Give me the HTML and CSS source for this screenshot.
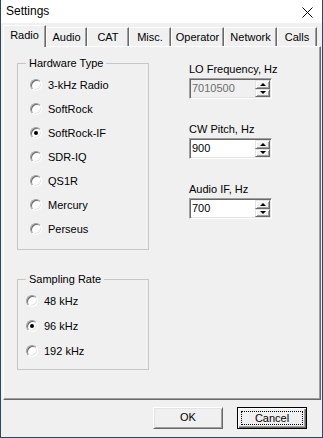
FILE: index.html
```html
<!DOCTYPE html>
<html lang="en">
<head>
    <meta charset="UTF-8">
    <title>Settings</title>
    <link rel="stylesheet" href="styles.css">
</head>
<body>
    <div class="window">
        <div class="titlebar">
            <span class="title">Settings</span>
            <svg class="close" width="11" height="11" viewBox="0 0 11 11">
                <path d="M0.5 0.5 L10.5 10.5 M10.5 0.5 L0.5 10.5" stroke="#000" stroke-width="1" fill="none"/>
            </svg>
        </div>
        <ul class="tabs">
            <li class="tab on t-radio">Radio</li>
            <li class="tab t-audio">Audio</li>
            <li class="tab t-cat">CAT</li>
            <li class="tab t-misc">Misc.</li>
            <li class="tab t-operator">Operator</li>
            <li class="tab t-network">Network</li>
            <li class="tab t-calls">Calls</li>
        </ul>
        <div class="panel">
            <div class="col-left">
                <fieldset class="group hw">
                    <legend>Hardware Type</legend>
                    <div class="opts">
                        <div class="opt"><span class="radio"></span>3-kHz Radio</div>
                        <div class="opt"><span class="radio"></span>SoftRock</div>
                        <div class="opt"><span class="radio checked"></span>SoftRock-IF</div>
                        <div class="opt"><span class="radio"></span>SDR-IQ</div>
                        <div class="opt"><span class="radio"></span>QS1R</div>
                        <div class="opt"><span class="radio"></span>Mercury</div>
                        <div class="opt"><span class="radio"></span>Perseus</div>
                    </div>
                </fieldset>
                <fieldset class="group sr">
                    <legend>Sampling Rate</legend>
                    <div class="opts">
                        <div class="opt"><span class="radio"></span>48 kHz</div>
                        <div class="opt"><span class="radio checked"></span>96 kHz</div>
                        <div class="opt"><span class="radio"></span>192 kHz</div>
                    </div>
                </fieldset>
            </div>
            <div class="col-right">
                <div class="field">
                    <div class="label">LO Frequency, Hz</div>
                    <div class="spin disabled">
                        <span class="value">7010500</span>
                        <span class="spinbtns"><span class="sbtn"><i class="up"></i></span><span class="sbtn"><i class="down"></i></span></span>
                    </div>
                </div>
                <div class="field">
                    <div class="label">CW Pitch, Hz</div>
                    <div class="spin">
                        <span class="value">900</span>
                        <span class="spinbtns"><span class="sbtn"><i class="up"></i></span><span class="sbtn"><i class="down"></i></span></span>
                    </div>
                </div>
                <div class="field">
                    <div class="label">Audio IF, Hz</div>
                    <div class="spin">
                        <span class="value">700</span>
                        <span class="spinbtns"><span class="sbtn"><i class="up"></i></span><span class="sbtn"><i class="down"></i></span></span>
                    </div>
                </div>
            </div>
        </div>
        <div class="buttons">
            <div class="btn">OK</div>
            <div class="btn default"><span class="focus">Cancel</span></div>
        </div>
    </div>
</body>
</html>
```

FILE: styles.css
```css
* {
    margin: 0;
    padding: 0;
    box-sizing: border-box;
}

li {
    list-style: none;
}

body {
    width: 323px;
    height: 438px;
    background: #f0f0f0;
    font-family: "Liberation Sans", Arial, sans-serif;
    font-size: 11px;
    color: #000;
    overflow: hidden;
}

.window {
    display: flex;
    flex-direction: column;
    width: 323px;
    height: 438px;
    background: #f0f0f0;
    border: 1px solid #2b4764;
    border-top: none;
}

/* title bar */
.titlebar {
    display: flex;
    align-items: center;
    justify-content: space-between;
    height: 23px;
    padding: 0 9px 0 5px;
    background: #fff;
}

.title {
    font-size: 12px;
    line-height: 23px;
}

.close {
    display: block;
    margin-top: 2px;
}

/* tabs */
.tabs {
    display: flex;
    align-items: flex-end;
    height: 23px;
    padding: 2px 0 0 2px;
}

.tab {
    height: 19px;
    line-height: 19px;
    text-align: center;
    border-top: 1px solid #fff;
    border-left: 1px solid #fff;
    border-right: 1px solid #696969;
    box-shadow: inset -1px 0 #a0a0a0;
    white-space: nowrap;
}

.tab.on {
    position: relative;
    z-index: 2;
    height: 22px;
    margin-bottom: -1px;
    line-height: 18px;
    background: #f0f0f0;
}

.t-radio { width: 43px; }
.t-audio { width: 41px; }
.t-cat { width: 42px; }
.t-misc { width: 42px; }
.t-operator { width: 53px; }
.t-network { width: 53px; }
.t-calls { width: 40px; }

/* panel */
.panel {
    display: flex;
    width: 318px;
    height: 354px;
    margin-left: 2px;
    padding: 10px 0 0 13px;
    border: 1px solid #fff;
    border-right-color: #696969;
    border-bottom-color: #696969;
    box-shadow: inset -1px -1px #a0a0a0;
}

.col-left {
    width: 132px;
}

.group {
    border: 1px solid #c6c6c6;
    padding: 0;
}

.group legend {
    margin-left: 8px;
    padding: 0 3px;
    line-height: 13px;
}

.hw .opts {
    padding: 3px 0 8px 12px;
}

.hw .opt {
    height: 24px;
}

.sr {
    margin-top: 23px;
}

.sr .opts {
    padding: 2px 0 6px 8px;
}

.sr .opt {
    height: 25px;
}

.opt {
    display: flex;
    align-items: center;
}

.radio {
    position: relative;
    width: 12px;
    height: 12px;
    margin-right: 6px;
    border-radius: 50%;
    background: #fff;
    border: 1px solid;
    border-color: #a0a0a0 #fff #fff #a0a0a0;
    box-shadow: inset 1px 1px #696969, inset -1px -1px #e3e3e3;
}

.radio.checked::after {
    content: "";
    position: absolute;
    top: 3px;
    left: 3px;
    width: 4px;
    height: 4px;
    border-radius: 50%;
    background: #000;
}

.col-right {
    margin-left: 40px;
    padding-top: 6px;
}

.field {
    margin-bottom: 24px;
}

.label {
    line-height: 13px;
    margin-bottom: 2px;
}

.spin {
    display: flex;
    width: 83px;
    height: 21px;
    background: #fff;
    border: 1px solid;
    border-color: #a0a0a0 #fff #fff #a0a0a0;
    box-shadow: inset 1px 1px #696969, inset -1px -1px #e3e3e3;
}

.spin.disabled {
    background: #f0f0f0;
}

.spin.disabled .value {
    color: #6d6d6d;
}

.value {
    flex: 1;
    padding-left: 2px;
    line-height: 19px;
}

.spinbtns {
    display: flex;
    flex-direction: column;
    width: 15px;
    margin: 1px 1px 1px 0;
}

.sbtn {
    display: flex;
    align-items: center;
    justify-content: center;
    height: 8.5px;
    background: #f0f0f0;
    border: 1px solid;
    border-color: #e3e3e3 #696969 #696969 #e3e3e3;
    box-shadow: inset 1px 1px #fff, inset -1px -1px #a0a0a0;
}

.sbtn i {
    display: block;
    width: 0;
    height: 0;
    border-left: 3px solid transparent;
    border-right: 3px solid transparent;
}

.sbtn .up {
    border-bottom: 3px solid #000;
}

.sbtn .down {
    border-top: 3px solid #000;
}

/* bottom buttons */
.buttons {
    display: flex;
    justify-content: flex-end;
    gap: 14px;
    padding: 7px 15px 0 0;
}

.btn {
    width: 70px;
    height: 22px;
    line-height: 18px;
    text-align: center;
    background: #f0f0f0;
    border: 1px solid;
    border-color: #fff #696969 #696969 #fff;
    box-shadow: inset 1px 1px #e3e3e3, inset -1px -1px #a0a0a0;
}

.btn.default {
    border: 1px solid #000;
    box-shadow: inset 1px 1px #fff, inset -1px -1px #696969, inset -2px -2px #a0a0a0;
    padding: 3px;
}

.focus {
    display: block;
    height: 14px;
    line-height: 12px;
    border: 1px dotted #000;
}
```
